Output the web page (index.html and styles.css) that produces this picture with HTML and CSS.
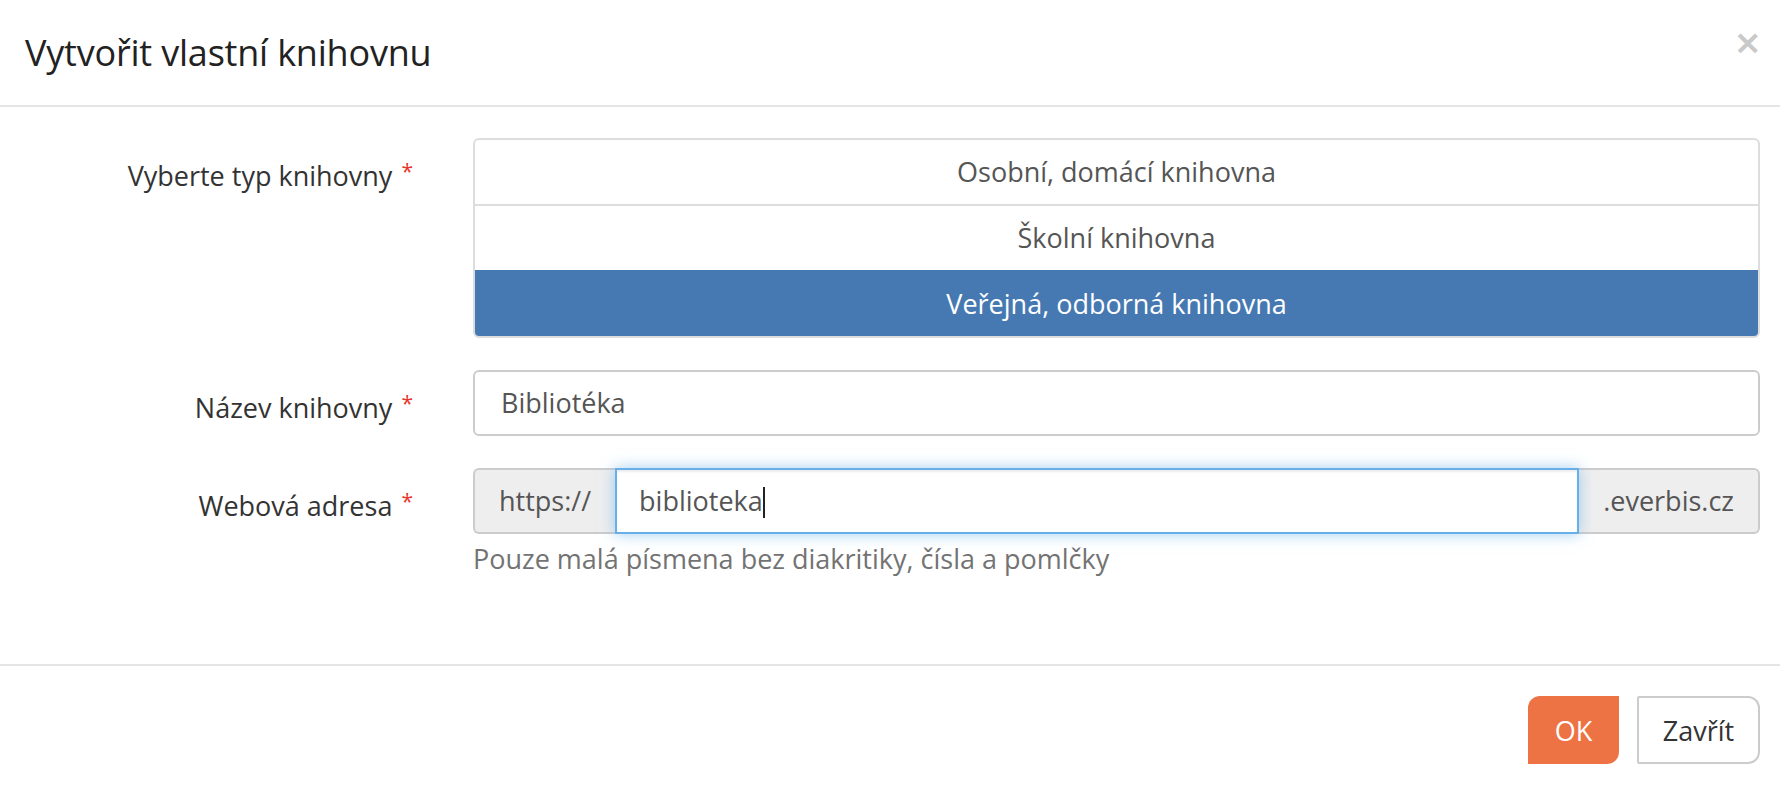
FILE: index.html
```html
<!DOCTYPE html>
<html lang="cs">
<head>
    <meta charset="UTF-8">
    <meta name="viewport" content="width=device-width, initial-scale=1.0">
    <title>Vytvořit vlastní knihovnu</title>
    <link rel="stylesheet" href="styles.css">
</head>
<body>
    <div class="modal">
        <div class="modal-header">
            <h4 class="modal-title">Vytvořit vlastní knihovnu</h4>
            <button class="close" type="button" aria-label="Zavřít">&times;</button>
        </div>

        <form class="modal-body">
            <div class="form-row">
                <label class="control-label">Vyberte typ knihovny <span class="req">*</span></label>
                <div class="list-group">
                    <a class="list-group-item">Osobní, domácí knihovna</a>
                    <a class="list-group-item">Školní knihovna</a>
                    <a class="list-group-item active">Veřejná, odborná knihovna</a>
                </div>
            </div>

            <div class="form-row">
                <label class="control-label">Název knihovny <span class="req">*</span></label>
                <div class="form-control">Bibliotéka</div>
            </div>

            <div class="form-row">
                <label class="control-label">Webová adresa <span class="req">*</span></label>
                <div>
                    <div class="input-group">
                        <span class="addon addon-left">https://</span>
                        <div class="form-control focused">biblioteka<span class="caret"></span></div>
                        <span class="addon addon-right">.everbis.cz</span>
                    </div>
                    <p class="help-block">Pouze malá písmena bez diakritiky, čísla a pomlčky</p>
                </div>
            </div>
        </form>

        <div class="modal-footer">
            <button class="btn btn-ok" type="button">OK</button>
            <button class="btn btn-close" type="button">Zavřít</button>
        </div>
    </div>
</body>
</html>
```

FILE: styles.css
```css
body {
    margin: 0;
    background-color: #fff;
    font-family: "Open Sans", "DejaVu Sans", sans-serif;
    font-size: 27px;
    color: #333;
}
.modal {
    width: 1780px;
    height: 788px;
    display: flex;
    flex-direction: column;
}

/* header */
.modal-header {
    height: 105px;
    flex-shrink: 0;
    padding: 0 18px 0 25px;
    display: flex;
    align-items: center;
    justify-content: space-between;
    border-bottom: 2px solid #e5e5e5;
}
.modal-title {
    margin: 0;
    font-size: 36px;
    font-weight: 400;
    color: #222;
    letter-spacing: -0.2px;
}
.close {
    border: none;
    background: none;
    padding: 0;
    font-family: "DejaVu Sans", sans-serif;
    font-size: 34px;
    font-weight: bold;
    line-height: 1;
    color: #c9c9c9;
    margin-top: -22px;
}

/* body */
.modal-body {
    padding: 31px 20px 0 25px;
    height: 557px;
    flex-shrink: 0;
    box-sizing: border-box;
    display: flex;
    flex-direction: column;
    gap: 32px;
}
.form-row {
    display: grid;
    grid-template-columns: 418px 1fr;
    column-gap: 30px;
}
.control-label {
    text-align: right;
    padding: 16px 30px 0 0;
    line-height: 34px;
}
.req {
    color: #e8352b;
    font-size: 21px;
    vertical-align: 7px;
    margin-left: 2px;
}

.list-group {
    border: 2px solid #ddd;
    border-radius: 6px;
    overflow: hidden;
}
.list-group-item {
    display: block;
    height: 64px;
    line-height: 64px;
    text-align: center;
    color: #555;
    border-top: 2px solid #ddd;
}
.list-group-item:first-child {
    border-top: none;
}
.list-group-item.active {
    background-color: #4679b2;
    color: #fff;
    border-top-color: #4679b2;
}

.form-control {
    height: 66px;
    box-sizing: border-box;
    padding: 0 26px;
    line-height: 62px;
    border: 2px solid #ccc;
    border-radius: 6px;
    color: #555;
}

.input-group {
    display: flex;
    height: 66px;
}
.addon {
    padding: 0 24px;
    line-height: 62px;
    border: 2px solid #ccc;
    background-color: #eee;
    color: #555;
}
.addon-left {
    border-right: none;
    border-radius: 6px 0 0 6px;
}
.addon-right {
    border-left: none;
    border-radius: 0 6px 6px 0;
}
.input-group .form-control {
    flex: 1;
    border-radius: 0;
    padding-left: 22px;
    height: 66px;
}
.form-control.focused {
    position: relative;
    border-color: #66afe9;
    box-shadow: inset 0 2px 2px rgba(0, 0, 0, 0.075), 0 0 14px rgba(102, 175, 233, 0.6);
}
.caret {
    display: inline-block;
    width: 2px;
    height: 31px;
    background-color: #222;
    vertical-align: -7px;
}
.help-block {
    margin: 8px 0 0;
    line-height: 34px;
    color: #737373;
}

/* footer */
.modal-footer {
    border-top: 2px solid #e5e5e5;
    padding: 30px 20px 0 0;
    display: flex;
    justify-content: flex-end;
    gap: 18px;
}
.btn {
    height: 68px;
    font-family: inherit;
    font-size: 27px;
    cursor: pointer;
}
.btn-ok {
    width: 91px;
    border: none;
    background-color: #ed7345;
    color: #fff;
    border-radius: 12px 0 12px 0;
}
.btn-close {
    width: 123px;
    border: 2px solid #ccc;
    background-color: #fff;
    color: #333;
    border-radius: 2px 12px 12px 2px;
}
```
